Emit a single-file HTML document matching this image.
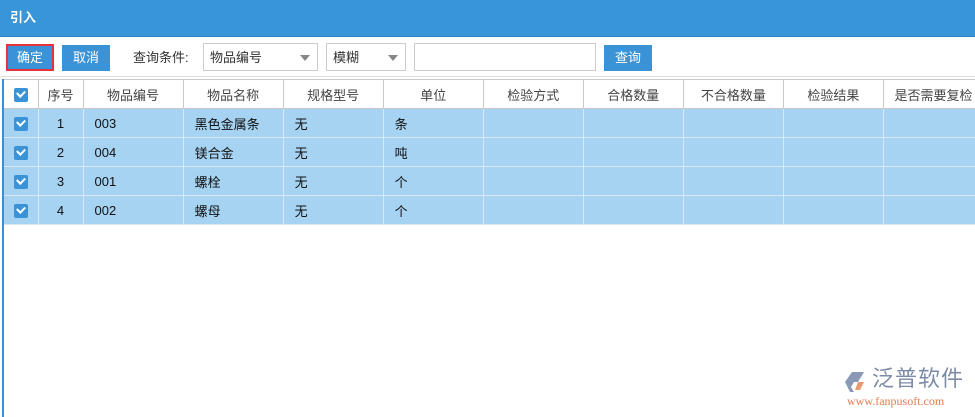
<!DOCTYPE html><html><head><meta charset="utf-8"><style>
body{margin:0;width:975px;height:417px;background:#fff;font-family:"Liberation Sans","Noto Sans CJK SC",sans-serif;font-size:13px;color:#333;position:relative;overflow:hidden}
.abs{position:absolute}
.title{left:0;top:0;width:975px;height:36px;background:#3895d8;border-bottom:1px solid #2a7fc0;color:#fff;font-weight:bold;font-size:13px;line-height:36px;text-indent:10px}
.btn{background:#3a93d6;color:#fff;text-align:center;line-height:26px;height:26px}
.sel{border:1px solid #ccc;height:28px;line-height:28px;text-indent:6px;box-sizing:border-box;color:#333}
.tri{position:absolute;right:7px;top:11px;border-left:5px solid transparent;border-right:5px solid transparent;border-top:6px solid #888}
.wrap{position:absolute;left:2px;top:79px;width:1100px}
table{border-collapse:collapse;table-layout:fixed;width:982px;border-left:2px solid #3a8fd4}
td{border:1px solid #ccc;border-top:none;height:28px;padding:0;white-space:nowrap;overflow:hidden}
thead td{text-align:center;color:#444;border-top:1px solid #ccc;border-color:#c8c8c8}
tbody td{background:#a6d3f2;border-color:#d8e8f4;color:#111}
.cb{display:inline-block;width:14px;height:14px;background:#3a93d6;border-radius:2px;position:relative;vertical-align:middle}
.cb:after{content:"";position:absolute;left:3px;top:2px;width:6px;height:4px;border-left:2px solid #fff;border-bottom:2px solid #fff;transform:rotate(-45deg)}
.l{padding-left:11px}
</style></head><body>
<div class="abs title">引入</div>
<div class="abs btn" style="left:6px;top:44px;width:48px;height:27px;box-shadow:inset 0 0 0 2px #e8313a;line-height:27px">确定</div>
<div class="abs btn" style="left:62px;top:45px;width:48px">取消</div>
<div class="abs" style="left:133px;top:45px;line-height:26px">查询条件:</div>
<div class="abs sel" style="left:203px;top:43px;width:115px">物品编号<span class="tri"></span></div>
<div class="abs sel" style="left:326px;top:43px;width:80px">模糊<span class="tri"></span></div>
<div class="abs sel" style="left:414px;top:43px;width:182px"></div>
<div class="abs btn" style="left:604px;top:45px;width:48px">查询</div>
<div class="abs" style="left:0;top:76px;width:975px;height:1px;background:#ddd"></div>
<div class="wrap"><table>
<colgroup><col style="width:35px"><col style="width:45px"><col style="width:100px"><col style="width:100px"><col style="width:100px"><col style="width:100px"><col style="width:100px"><col style="width:100px"><col style="width:100px"><col style="width:100px"><col style="width:100px"></colgroup>
<thead><tr><td><span class="cb"></span></td><td>序号</td><td>物品编号</td><td>物品名称</td><td>规格型号</td><td>单位</td><td>检验方式</td><td>合格数量</td><td>不合格数量</td><td>检验结果</td><td>是否需要复检</td></tr></thead>
<tbody>
<tr><td style="text-align:center"><span class="cb"></span></td><td style="text-align:center">1</td><td class="l">003</td><td class="l">黑色金属条</td><td class="l">无</td><td class="l">条</td><td></td><td></td><td></td><td></td><td></td></tr>
<tr><td style="text-align:center"><span class="cb"></span></td><td style="text-align:center">2</td><td class="l">004</td><td class="l">镁合金</td><td class="l">无</td><td class="l">吨</td><td></td><td></td><td></td><td></td><td></td></tr>
<tr><td style="text-align:center"><span class="cb"></span></td><td style="text-align:center">3</td><td class="l">001</td><td class="l">螺栓</td><td class="l">无</td><td class="l">个</td><td></td><td></td><td></td><td></td><td></td></tr>
<tr><td style="text-align:center"><span class="cb"></span></td><td style="text-align:center">4</td><td class="l">002</td><td class="l">螺母</td><td class="l">无</td><td class="l">个</td><td></td><td></td><td></td><td></td><td></td></tr>
</tbody></table></div>
<div class="abs" style="left:2px;top:224px;width:2px;height:193px;background:#3a8fd4"></div>
<svg class="abs" style="left:845px;top:370px" width="26" height="24" viewBox="0 0 26 24"><path d="M7 2h12l-6 10H9l-3 5 3 5H5L0 12z" fill="#8a9ab5"/><path d="M13 12h6l-4 8h-5z" fill="#e89a70"/></svg>
<div class="abs" style="left:872px;top:367px;font-size:22px;color:#7d8ba6;letter-spacing:1px;line-height:24px">泛普软件</div>
<div class="abs" style="left:847px;top:394px;font-family:'Liberation Serif',serif;font-size:12px;color:#e07a50;line-height:14px">www.fanpusoft.com</div>
</body></html>
